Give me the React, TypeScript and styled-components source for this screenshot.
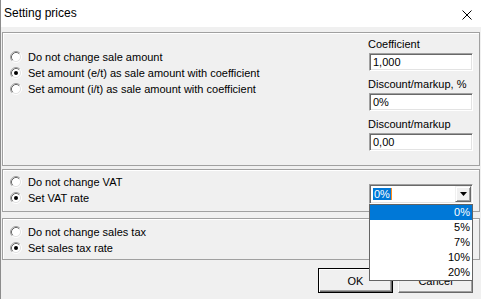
import React from 'react';
import styled, { createGlobalStyle } from 'styled-components';

const GlobalStyle = createGlobalStyle`
  html, body {
    margin: 0;
    padding: 0;
    background: #f0f0f0;
  }
  * {
    box-sizing: border-box;
  }
`;

const Window = styled.div`
  width: 481px;
  height: 299px;
  border-left: 1px solid #8c8c8c;
  background: #f0f0f0;
  font-family: 'Liberation Sans', Arial, sans-serif;
  font-size: 11px;
  color: #000;
  overflow: hidden;
`;

const TitleBar = styled.div`
  height: 27px;
  background: #fff;
  display: flex;
  align-items: center;
  justify-content: space-between;
  padding: 0 8px 1px 3px;
  font-size: 12px;
`;

const CloseButton = styled.div`
  width: 10px;
  height: 10px;
  display: flex;
  margin-top: 3px;
  margin-right: 1px;
`;

const Client = styled.div`
  display: flex;
  flex-direction: column;
  padding: 5px 1px 0 1px;
`;

const Panel = styled.div<{ $h: number; $top?: number }>`
  height: ${(p) => p.$h}px;
  margin-top: ${(p) => p.$top ?? 0}px;
  width: 478px;
  border: 1px solid #a0a0a0;
  box-shadow: inset 1px 1px 0 #fff;
  display: flex;
  padding: 3px 6px 0 7px;
`;

const RadioColumn = styled.div<{ $top: number }>`
  flex: 1;
  display: flex;
  flex-direction: column;
  padding-top: ${(p) => p.$top}px;
`;

const RadioRow = styled.label`
  height: 16px;
  display: flex;
  align-items: center;
  gap: 6px;
  white-space: nowrap;
`;

const FieldColumn = styled.div`
  width: 104px;
  display: flex;
  flex-direction: column;
  gap: 5px;
`;

const Field = styled.div`
  display: flex;
  flex-direction: column;
`;

const FieldLabel = styled.div`
  line-height: 16px;
  margin-left: -1px;
`;

const TextBox = styled.div`
  margin-top: 1px;
  height: 18px;
  background: #fff;
  border: 1px solid;
  border-color: #a0a0a0 #fff #fff #a0a0a0;
  box-shadow: inset 1px 1px 0 #696969, inset -1px -1px 0 #e3e3e3;
  padding: 0 3px;
  line-height: 16px;
`;

const Combo = styled.div`
  position: relative;
  width: 104px;
  height: 20px;
  margin-top: 11px;
  background: #fff;
  border: 1px solid;
  border-color: #a0a0a0 #fff #fff #a0a0a0;
  box-shadow: inset 1px 1px 0 #696969, inset -1px -1px 0 #e3e3e3;
  padding: 1px;
  display: flex;
  align-items: stretch;
`;

const ComboValue = styled.div`
  flex: 1;
  display: flex;
  align-items: center;
  padding-left: 2px;
`;

const Selected = styled.span`
  background: #0078d7;
  color: #fff;
  line-height: 12px;
  padding: 0 1px;
  border-right: 1px solid #ff8c1a;
`;

const DropButton = styled.div`
  width: 16px;
  background: #f0f0f0;
  border: 1px solid;
  border-color: #f0f0f0 #696969 #696969 #f0f0f0;
  box-shadow: inset 1px 1px 0 #fff, inset -1px -1px 0 #a0a0a0;
  display: flex;
  align-items: center;
  justify-content: center;
`;

const DropList = styled.div`
  position: absolute;
  top: calc(100% + 1px);
  left: -1px;
  width: 104px;
  background: #fff;
  border: 1px solid #646464;
  z-index: 10;
`;

const DropItem = styled.div<{ $active?: boolean }>`
  height: 15px;
  line-height: 15px;
  text-align: right;
  padding-right: 2px;
  background: ${(p) => (p.$active ? '#0078d7' : '#fff')};
  color: ${(p) => (p.$active ? '#fff' : '#000')};
`;

const ButtonRow = styled.div`
  display: flex;
  justify-content: flex-end;
  gap: 5px;
  margin-top: 8px;
  padding-right: 7px;
`;

const Button = styled.button<{ $default?: boolean }>`
  width: 75px;
  height: 25px;
  font-family: inherit;
  font-size: 11px;
  color: #000;
  background: #f0f0f0;
  padding: 0;
  border: 1px solid;
  border-color: ${(p) => (p.$default ? '#000' : '#fff #696969 #696969 #fff')};
  box-shadow: ${(p) =>
    p.$default
      ? 'inset 1px 1px 0 #fff, inset -1px -1px 0 #696969, inset -2px -2px 0 #a0a0a0'
      : 'inset -1px -1px 0 #a0a0a0, inset 1px 1px 0 #e3e3e3'};
`;

const Radio: React.FC<{ checked?: boolean }> = ({ checked }) => (
  <svg width="12" height="12" viewBox="0 0 12 12">
    <circle cx="6" cy="6" r="4.5" fill="#fff" />
    <path d="M2.11 9.89 A5.5 5.5 0 0 1 9.89 2.11" fill="none" stroke="#a0a0a0" />
    <path d="M9.89 2.11 A5.5 5.5 0 0 1 2.11 9.89" fill="none" stroke="#fff" />
    <path d="M2.82 9.18 A4.5 4.5 0 0 1 9.18 2.82" fill="none" stroke="#696969" />
    <path d="M9.18 2.82 A4.5 4.5 0 0 1 2.82 9.18" fill="none" stroke="#e3e3e3" />
    {checked && <circle cx="6" cy="6" r="2" fill="#000" />}
  </svg>
);

const rates = ['0%', '5%', '7%', '10%', '20%'];

const App: React.FC = () => (
  <>
    <GlobalStyle />
    <Window>
      <TitleBar>
        <span>Setting prices</span>
        <CloseButton>
          <svg width="10" height="10" viewBox="0 0 10 10">
            <path d="M0.5 0.5 L9.5 9.5 M9.5 0.5 L0.5 9.5" stroke="#000" strokeWidth="1" />
          </svg>
        </CloseButton>
      </TitleBar>
      <Client>
        <Panel $h={134}>
          <RadioColumn $top={13}>
            <RadioRow>
              <Radio /> Do not change sale amount
            </RadioRow>
            <RadioRow>
              <Radio checked /> Set amount (e/t) as sale amount with coefficient
            </RadioRow>
            <RadioRow>
              <Radio /> Set amount (i/t) as sale amount with coefficient
            </RadioRow>
          </RadioColumn>
          <FieldColumn>
            <Field>
              <FieldLabel>Coefficient</FieldLabel>
              <TextBox>1,000</TextBox>
            </Field>
            <Field>
              <FieldLabel>Discount/markup, %</FieldLabel>
              <TextBox>0%</TextBox>
            </Field>
            <Field>
              <FieldLabel>Discount/markup</FieldLabel>
              <TextBox>0,00</TextBox>
            </Field>
          </FieldColumn>
        </Panel>
        <Panel $h={43} $top={3} style={{ position: 'relative', zIndex: 2 }}>
          <RadioColumn $top={1}>
            <RadioRow>
              <Radio /> Do not change VAT
            </RadioRow>
            <RadioRow>
              <Radio checked /> Set VAT rate
            </RadioRow>
          </RadioColumn>
          <Combo>
            <ComboValue>
              <Selected>0%</Selected>
            </ComboValue>
            <DropButton>
              <svg width="7" height="4" viewBox="0 0 7 4">
                <path d="M0 0 H7 L3.5 4 Z" fill="#000" />
              </svg>
            </DropButton>
            <DropList>
              {rates.map((r, i) => (
                <DropItem key={r} $active={i === 0}>
                  {r}
                </DropItem>
              ))}
            </DropList>
          </Combo>
        </Panel>
        <Panel $h={42} $top={6}>
          <RadioColumn $top={2}>
            <RadioRow>
              <Radio /> Do not change sales tax
            </RadioRow>
            <RadioRow>
              <Radio checked /> Set sales tax rate
            </RadioRow>
          </RadioColumn>
        </Panel>
        <ButtonRow>
          <Button $default>OK</Button>
          <Button>Cancel</Button>
        </ButtonRow>
      </Client>
    </Window>
  </>
);

export default App;
